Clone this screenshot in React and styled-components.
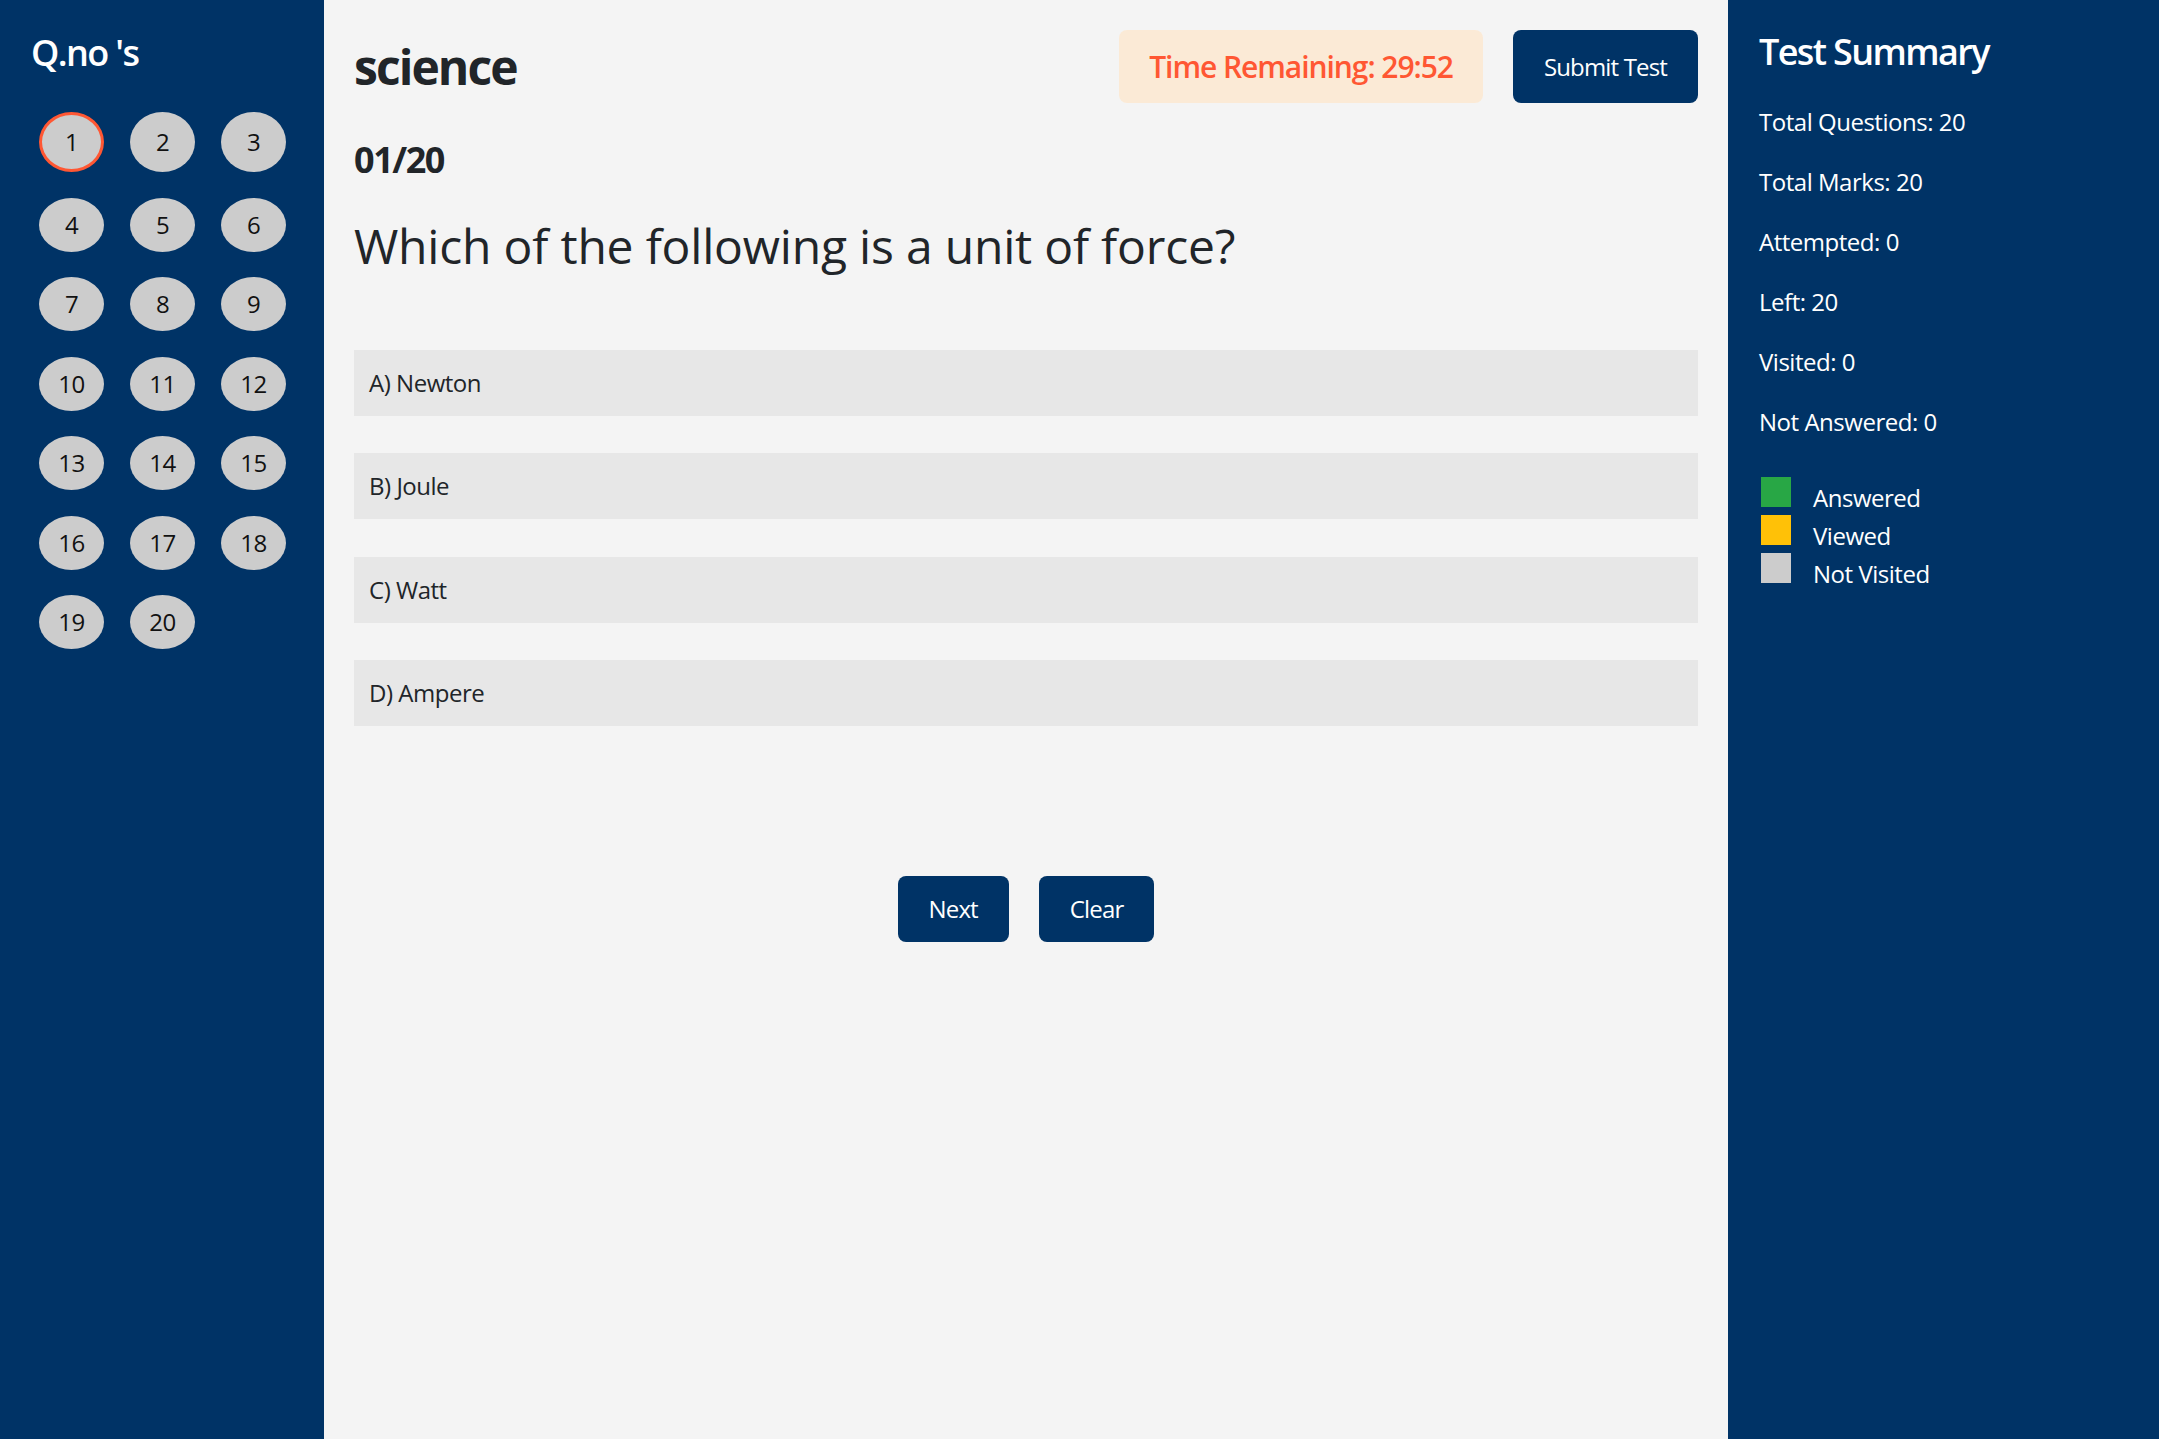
import React from "react";
import styled, {createGlobalStyle} from "styled-components";

const GlobalStyle = createGlobalStyle`
  body {
    margin: 0;
    font-family: "Open Sans", "Noto Sans", sans-serif;
    letter-spacing: -0.03em;
    background: #f4f4f4;
  }
`;

const questions = Array.from({length: 20}, (_, i) => i + 1);

const options = ["A) Newton", "B) Joule", "C) Watt", "D) Ampere"];

const summary = [
  "Total Questions: 20",
  "Total Marks: 20",
  "Attempted: 0",
  "Left: 20",
  "Visited: 0",
  "Not Answered: 0",
];

const legend = [
  {label: "Answered", color: "#28a745"},
  {label: "Viewed", color: "#ffc107"},
  {label: "Not Visited", color: "#cccccc"},
];

const App = () => {
  return (
    <Wrapper>
      <GlobalStyle />
      <LeftBar>
        <SideTitle>Q.no 's</SideTitle>
        <QGrid>
          {questions.map((q) => (
            <QButton key={q} $active={q === 1}>
              {q}
            </QButton>
          ))}
        </QGrid>
      </LeftBar>

      <Main>
        <Header>
          <Subject>science</Subject>
          <HeaderRight>
            <Timer>Time Remaining: 29:52</Timer>
            <DarkButton $tall>Submit Test</DarkButton>
          </HeaderRight>
        </Header>
        <Counter>01/20</Counter>
        <Question>Which of the following is a unit of force?</Question>
        <Options>
          {options.map((o) => (
            <Option key={o}>{o}</Option>
          ))}
        </Options>
        <Nav>
          <DarkButton>Next</DarkButton>
          <DarkButton>Clear</DarkButton>
        </Nav>
      </Main>

      <RightBar>
        <SideTitle>Test Summary</SideTitle>
        {summary.map((s) => (
          <Stat key={s}>{s}</Stat>
        ))}
        <Legend>
          {legend.map((l) => (
            <LegendRow key={l.label}>
              <Swatch $color={l.color} />
              {l.label}
            </LegendRow>
          ))}
        </Legend>
      </RightBar>
    </Wrapper>
  );
};

const Wrapper = styled.div`
  display: flex;
  min-height: 100vh;
`;

const LeftBar = styled.aside`
  width: 324px;
  flex-shrink: 0;
  box-sizing: border-box;
  background-color: #003366;
  color: white;
  padding: 31px 0 0 31px;
`;

const SideTitle = styled.h2`
  margin: 0;
  font-size: 36px;
  line-height: 44px;
  font-weight: 600;
  letter-spacing: -0.045em;
  color: white;
`;

const QGrid = styled.div`
  display: grid;
  grid-template-columns: repeat(3, 65px);
  column-gap: 26px;
  row-gap: 25.5px;
  margin: 37px 0 0 8px;
`;

const QButton = styled.button`
  box-sizing: border-box;
  padding: 12px 0;
  border: ${(p) => (p.$active ? "3px solid #ff5733" : "none")};
  border-radius: 50%;
  background: #cccccc;
  color: #111;
  font-family: inherit;
  font-size: 24px;
  line-height: 30px;
  letter-spacing: -0.02em;
  cursor: pointer;
`;

const Main = styled.main`
  flex: 1;
  background: #f4f4f4;
  padding: 30px;
  color: #212529;
`;

const Header = styled.div`
  display: flex;
  justify-content: space-between;
  align-items: center;
`;

const Subject = styled.h1`
  margin: 0;
  font-size: 48px;
  font-weight: 700;
  line-height: 58px;
  letter-spacing: -0.04em;
`;

const HeaderRight = styled.div`
  display: flex;
  gap: 30px;
`;

const Timer = styled.div`
  height: 73px;
  display: flex;
  align-items: center;
  padding: 0 30px;
  border-radius: 8px;
  background: #fbead6;
  color: #ff5733;
  font-size: 30px;
  font-weight: 600;
  letter-spacing: -0.035em;
`;

const DarkButton = styled.button`
  height: ${(p) => (p.$tall ? "73px" : "66px")};
  padding: 0 31px;
  border: none;
  border-radius: 8px;
  background: #003366;
  color: white;
  font-family: inherit;
  font-size: 24px;
  line-height: 36px;
  letter-spacing: -0.035em;
  cursor: pointer;
`;

const Counter = styled.h2`
  margin: 35px 0 0;
  font-size: 36px;
  line-height: 44px;
  font-weight: 700;
  letter-spacing: -0.04em;
`;

const Question = styled.h2`
  margin: 35px 0 0;
  font-size: 48px;
  line-height: 58px;
  font-weight: 400;
  letter-spacing: -0.2px;
`;

const Options = styled.div`
  display: flex;
  flex-direction: column;
  gap: 37.5px;
  margin-top: 74.5px;
`;

const Option = styled.div`
  padding: 15px;
  background: #e7e7e7;
  font-size: 24px;
  line-height: 36px;
  letter-spacing: -0.02em;
  cursor: pointer;
`;

const Nav = styled.div`
  display: flex;
  justify-content: center;
  gap: 30px;
  margin-top: 149.5px;
`;

const RightBar = styled.aside`
  width: 431px;
  flex-shrink: 0;
  box-sizing: border-box;
  background-color: #003366;
  color: white;
  padding: 30px 20px 0 31px;
`;

const Stat = styled.p`
  margin: 0 0 24px;
  font-size: 24px;
  line-height: 36px;

  &:first-of-type {
    margin-top: 30px;
  }
`;

const Legend = styled.div`
  margin: 37px 0 0 2px;
`;

const LegendRow = styled.div`
  font-size: 24px;
  line-height: 35px;
`;

const Swatch = styled.span`
  display: inline-block;
  width: 30px;
  height: 30px;
  margin-right: 22px;
  background: ${(p) => p.$color};
`;

export default App;
